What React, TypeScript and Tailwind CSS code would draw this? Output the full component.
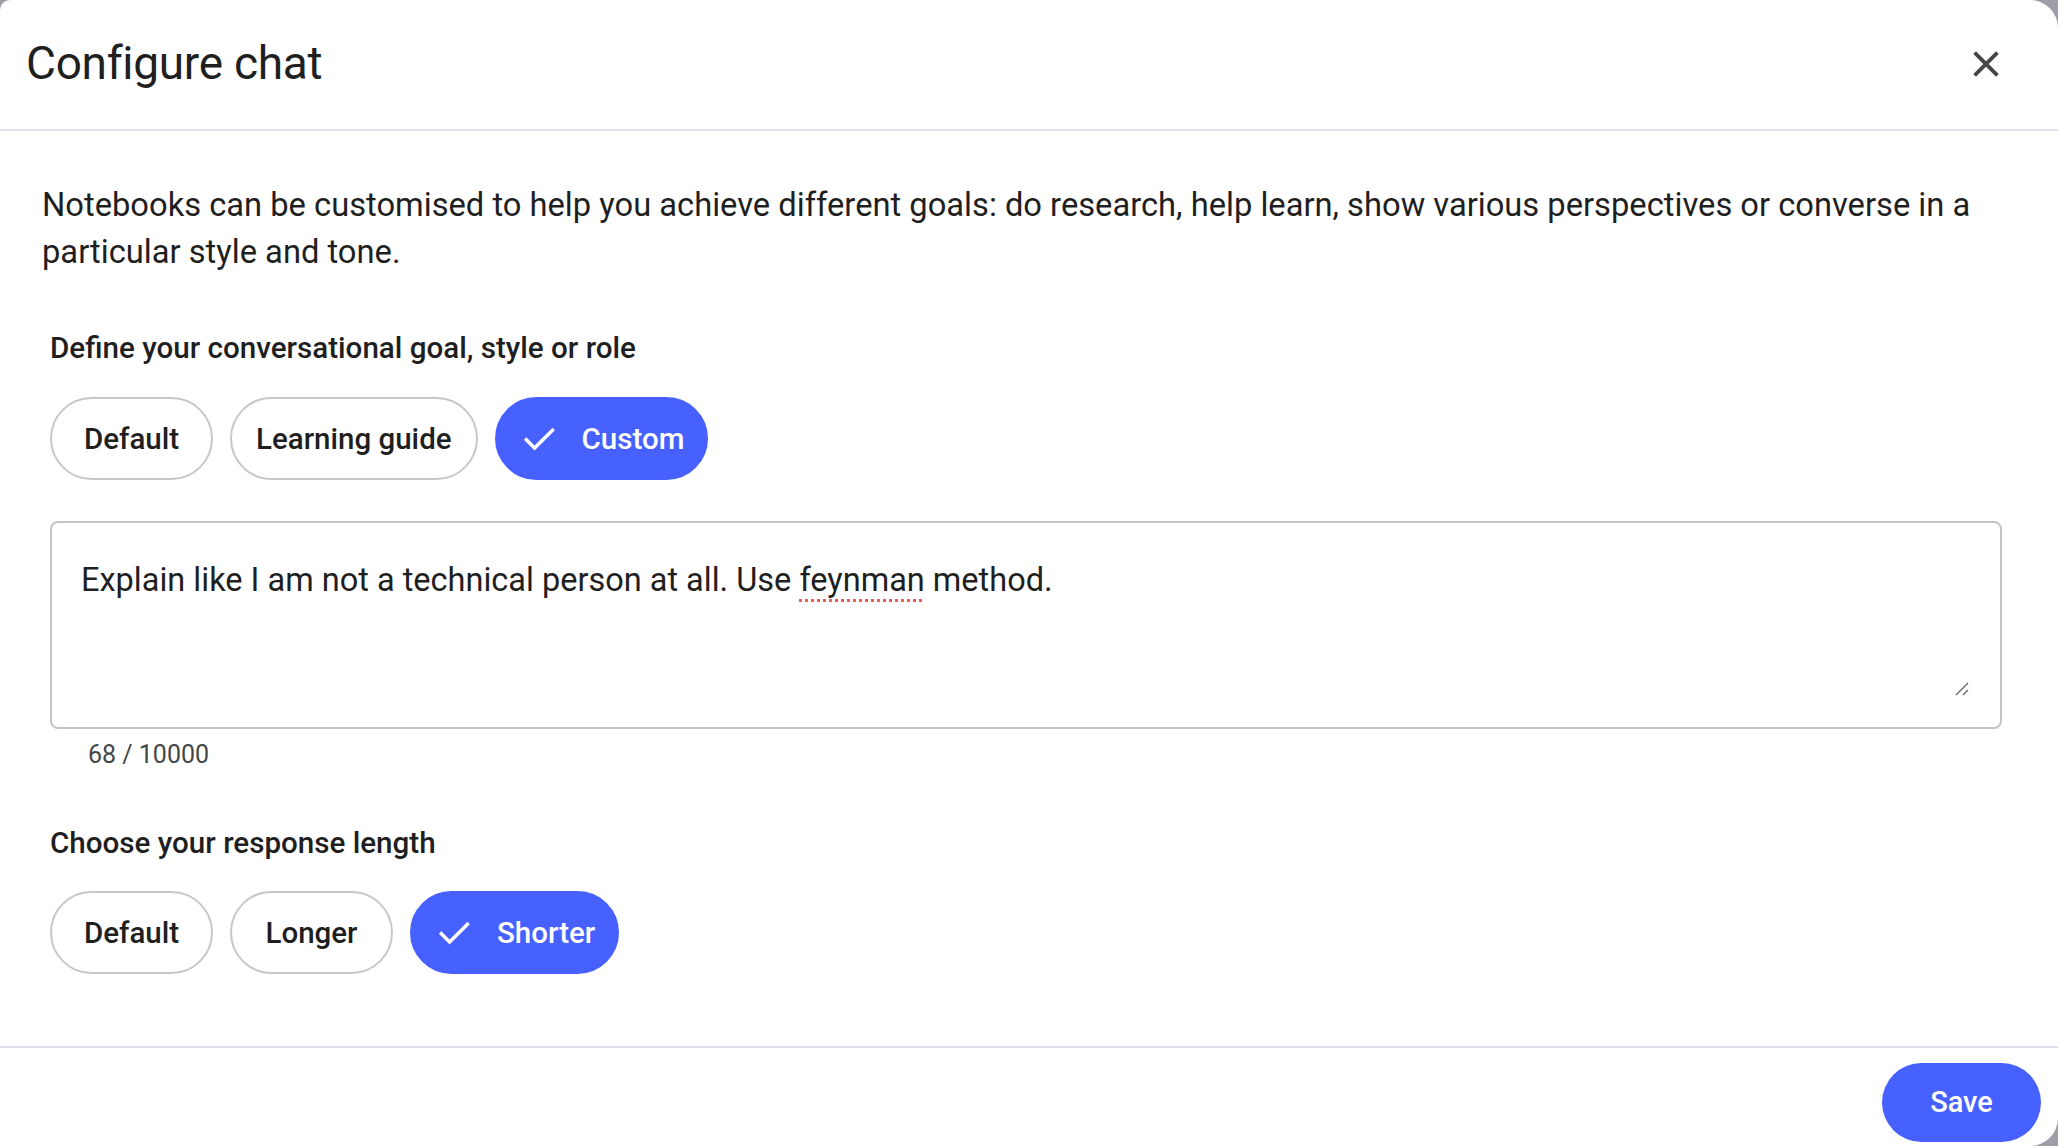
import React, { useState } from 'react';

const font = { fontFamily: 'Roboto, "Noto Sans", sans-serif' };

const CheckIcon: React.FC = () => (
    <svg viewBox="0 0 24 24" className="w-[38px] h-[38px]" fill="none" stroke="currentColor" strokeWidth="2.2" strokeLinecap="square">
        <path d="M4 12.5l5.2 5.2L20.5 6.5" />
    </svg>
);

const Chip: React.FC<{ label: string; selected?: boolean; onClick: () => void }> = ({ label, selected, onClick }) => (
    <button
        onClick={onClick}
        className={
            selected
                ? 'h-[83px] rounded-full bg-[#4661ff] border-2 border-[#4661ff] text-white pl-[23px] pr-[22px] flex items-center gap-[24px] text-[29.5px] font-medium'
                : 'h-[83px] min-w-[163px] rounded-full bg-white border-2 border-[#c7c7c7] text-[#1f1f1f] px-[24px] flex items-center justify-center text-[29.5px] font-medium'
        }
    >
        {selected && <CheckIcon />}
        {label}
    </button>
);

export default function App() {
    const [goal, setGoal] = useState('Custom');
    const [length, setLength] = useState('Shorter');

    return (
        <div className="w-[2058px] h-[1146px] bg-[#9d9ea6] overflow-hidden" style={font}>
            <div className="w-full h-full bg-white rounded-tl-[10px] rounded-tr-[28px] rounded-br-[28px] flex flex-col">
                {/* Header */}
                <div className="h-[131px] flex items-center justify-between pl-[26px] pr-[51px] border-b-2 border-[#dde1ee] shrink-0">
                    <h1 className="text-[46px] text-[#1f1f1f] font-normal tracking-[-0.3px] -mt-[2px]">Configure chat</h1>
                    <button className="text-[#444746] -mt-[2px]">
                        <svg viewBox="0 0 24 24" className="w-[42px] h-[42px]" fill="none" stroke="currentColor" strokeWidth="2.2">
                            <path d="M5.5 5.5l13 13M18.5 5.5l-13 13" />
                        </svg>
                    </button>
                </div>

                {/* Body */}
                <div className="flex-1 pl-[42px] pr-[40px] pt-[51px]">
                    <p className="text-[32.7px] leading-[47px] text-[#1f1f1f] whitespace-nowrap">
                        Notebooks can be customised to help you achieve different goals: do research, help learn, show various perspectives or converse in a
                        <br />
                        particular style and tone.
                    </p>

                    <div className="pl-[8px] pr-[16px]">
                        <h2 className="mt-[50px] text-[29.6px] font-medium text-[#1f1f1f]">Define your conversational goal, style or role</h2>
                        <div className="mt-[27px] flex gap-[17px]">
                            {['Default', 'Learning guide', 'Custom'].map(l => (
                                <Chip key={l} label={l} selected={goal === l} onClick={() => setGoal(l)} />
                            ))}
                        </div>

                        <div className="mt-[41px] h-[208px] border-2 border-[#c4c4c4] rounded-[8px] px-[29px] pt-[33px] relative">
                            <p className="text-[32.5px] text-[#1f1f1f]">
                                Explain like I am not a technical person at all. Use{' '}
                                <span className="underline decoration-dotted decoration-[#f05a5a] decoration-[3px] underline-offset-[8px]">feynman</span>{' '}
                                method.
                            </p>
                            <svg viewBox="0 0 16 16" className="absolute right-[30px] bottom-[30px] w-[16px] h-[16px]" stroke="#5f6368" strokeWidth="1.3">
                                <path d="M2 14L14 2M9 14l5-5" />
                            </svg>
                        </div>
                        <div className="mt-[7px] pl-[38px] text-[25px] text-[#444746]">68 / 10000</div>

                        <h2 className="mt-[47px] text-[29.6px] font-medium text-[#1f1f1f]">Choose your response length</h2>
                        <div className="mt-[26px] flex gap-[17px]">
                            {['Default', 'Longer', 'Shorter'].map(l => (
                                <Chip key={l} label={l} selected={length === l} onClick={() => setLength(l)} />
                            ))}
                        </div>
                    </div>
                </div>

                {/* Footer */}
                <div className="h-[100px] border-t-2 border-[#dde1ee] flex items-end justify-end pr-[17px] shrink-0">
                    <button className="h-[79px] w-[159px] rounded-full bg-[#4661ff] text-white text-[29px] font-medium mb-[4px]">
                        Save
                    </button>
                </div>
            </div>
        </div>
    );
}
